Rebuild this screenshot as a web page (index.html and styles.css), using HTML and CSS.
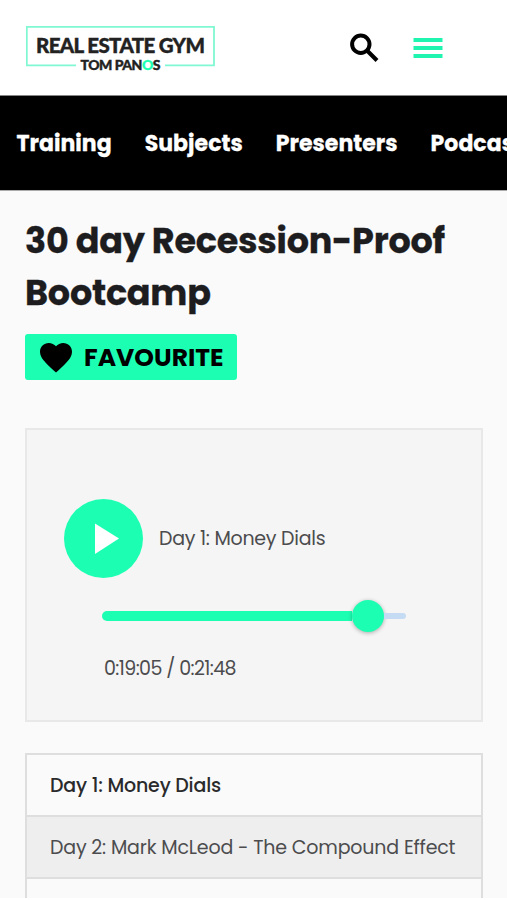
FILE: index.html
```html
<!DOCTYPE html>
<html lang="en">
<head>
    <meta charset="utf-8">
    <meta name="viewport" content="width=device-width, initial-scale=1">
    <title>30 day Recession-Proof Bootcamp</title>
    <link rel="stylesheet" href="styles.css">
</head>

<body>

<header class="header">
    <a class="logo" href="#">
        <svg width="190" height="50" viewBox="0 0 190 50">
            <path class="logo_box" d="M50 39.300H0.800V0.800H188V39.300H139"/>
            <text class="logo_name" x="10" y="27" textLength="169">REAL ESTATE GYM</text>
            <text class="logo_sub" x="54.500" y="44" textLength="80">TOM PAN<tspan class="logo_o">O</tspan>S</text>
        </svg>
    </a>
    <div class="header_icons">
        <svg class="icon_search" width="30" height="30" viewBox="0 0 30 30">
            <circle cx="10.800" cy="11.200" r="8.700"/>
            <path d="M17 17.500L27 27.500"/>
        </svg>
        <svg class="icon_menu" width="30" height="22" viewBox="0 0 30 22">
            <path d="M0.500 3H29.500M0.500 11H29.500M0.500 19H29.500"/>
        </svg>
    </div>
</header>

<nav class="nav">
    <a class="nav_link" href="#">Training</a>
    <a class="nav_link" href="#">Subjects</a>
    <a class="nav_link" href="#">Presenters</a>
    <a class="nav_link" href="#">Podcasts</a>
</nav>

<main class="content">
    <h1 class="title">30 day Recession-Proof Bootcamp</h1>

    <button type="button" class="favourite">
        <svg width="32" height="30" viewBox="0 0 32 30">
            <path d="M16 29.500L13.700 27.400C5.500 20 0 15 0 8.800C0 3.800 3.900 0 8.800 0C11.600 0 14.200 1.300 16 3.300C17.800 1.300 20.400 0 23.200 0C28.100 0 32 3.800 32 8.800C32 15 26.500 20 18.300 27.400Z"/>
        </svg>
        <span>FAVOURITE</span>
    </button>

    <section class="player">
        <div class="player_top">
            <button type="button" class="play" aria-label="Play">
                <svg width="79" height="79" viewBox="0 0 79 79">
                    <path d="M31 24.500L55 39.500L31 55Z"/>
                </svg>
            </button>
            <span class="track">Day 1: Money Dials</span>
        </div>
        <div class="slider">
            <div class="slider_fill"></div>
            <div class="slider_knob"></div>
            <div class="slider_rest"></div>
        </div>
        <div class="time">0:19:05 / 0:21:48</div>
    </section>

    <ul class="playlist">
        <li class="active">Day 1: Money Dials</li>
        <li class="hover">Day 2: Mark McLeod - The Compound Effect</li>
        <li></li>
    </ul>
</main>

</body>
</html>
```
FILE: styles.css
```css
* {
    box-sizing: border-box;
}

body {
    margin: 0;
    height: 900px;
    overflow: hidden;
    background: #fff;
    color: #1d1d1f;
    font-family: Poppins, Inter, "Liberation Sans", sans-serif;
}

.header {
    display: flex;
    justify-content: space-between;
    height: 96px;
    padding: 26px 64px 0 26px;
    border-bottom: 1px solid #858585;
}

.logo_box {
    fill: none;
    stroke: #80f8d2;
    stroke-width: 1.8;
}
.logo_name, .logo_sub {
    font-family: Lato, sans-serif;
    font-weight: 900;
    fill: #222;
    stroke: #222;
    stroke-width: .4;
}
.logo_name {
    font-size: 20.5px;
}
.logo_sub {
    font-size: 14px;
}
.logo_o {
    fill: #1cffb3;
    stroke: #1cffb3;
}

.header_icons {
    display: flex;
    gap: 33px;
    padding-top: 7px;
}
.icon_search {
    fill: none;
    stroke: #000;
    stroke-width: 4;
}
.icon_menu {
    margin-top: 4px;
    stroke: #20f5b0;
    stroke-width: 3.8;
}

.nav {
    display: flex;
    align-items: center;
    gap: 33px;
    height: 94px;
    padding-left: 16.5px;
    background: #000;
    overflow: hidden;
}
.nav_link {
    color: #fff;
    font-size: 22px;
    font-weight: 700;
    letter-spacing: .03px;
    text-decoration: none;
    white-space: nowrap;
    -webkit-text-stroke: .3px #fff;
}

.content {
    height: 708px;
    padding: 24px 24px 0 25px;
    background: #fafafa;
    border-top: 1px solid #aaa;
    overflow: hidden;
}

.title {
    margin: 0;
    font-size: 35px;
    line-height: 52px;
    font-weight: 700;
    letter-spacing: -.24px;
    -webkit-text-stroke: .3px #1d1d1f;
}

.favourite {
    display: flex;
    align-items: center;
    gap: 12px;
    width: 212px;
    height: 46px;
    margin: 15px 0 48px;
    padding: 1px 0 0 15px;
    border: none;
    border-radius: 3px;
    background: #1cffb3;
    color: #000;
    font: inherit;
    font-size: 25px;
    font-weight: 700;
}

.player {
    height: 294px;
    padding: 68px 37px 0;
    border: 2px solid #e8e8e8;
    background: #f5f5f5;
}
.player_top {
    display: flex;
    align-items: center;
    gap: 16px;
    height: 80px;
}
.play {
    width: 79px;
    height: 79px;
    padding: 0;
    border: none;
    border-radius: 50%;
    background: #1cffb3;
}
.play svg {
    display: block;
}
.play path {
    fill: #fff;
}
.track, .time, .playlist {
    font-size: 19px;
    font-weight: 400;
    letter-spacing: -.26px;
    color: #4c4c4e;
    white-space: nowrap;
}

.slider {
    display: flex;
    align-items: center;
    width: 304px;
    height: 32px;
    margin: 22px 0 0 38px;
}
.slider_fill {
    width: 250px;
    height: 10px;
    border-radius: 5px 0 0 5px;
    background: #1cffb3;
}
.slider_knob {
    width: 32px;
    height: 32px;
    border-radius: 50%;
    background: #1cffb3;
    box-shadow: 0 1px 4px rgba(0,0,0,.3);
}
.slider_rest {
    flex: 1;
    height: 6px;
    border-radius: 0 3px 3px 0;
    background: #c5dbf3;
}
.time {
    margin: 22px 0 0 40px;
    line-height: 30px;
    letter-spacing: -.6px;
}

.playlist {
    margin: 31px 0 0;
    padding: 0;
    border: 2px solid #dedede;
    list-style: none;
    letter-spacing: -.17px;
}
.playlist li {
    height: 62px;
    padding-left: 23px;
    border-bottom: 2px solid #dedede;
    line-height: 61px;
}
.playlist .active {
    font-weight: 500;
    color: #2a2a2c;
}
.playlist .hover {
    background: #eee;
}
```
